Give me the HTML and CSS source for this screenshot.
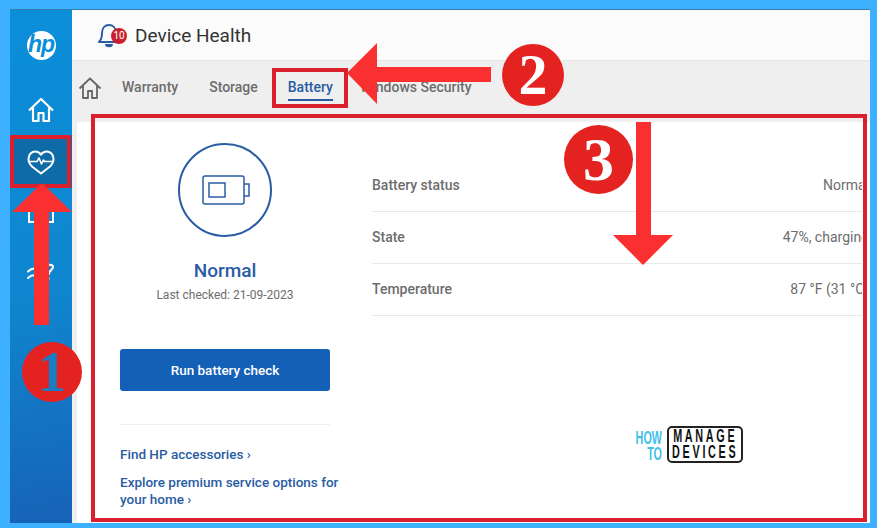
FILE: index.html
```html
<!DOCTYPE html>
<html lang="en">
<head>
    <meta charset="UTF-8">
    <meta name="viewport" content="width=device-width, initial-scale=1.0">
    <title>Device Health</title>
    <link rel="stylesheet" href="styles.css">
</head>
<body>
    <div class="app">
        <nav class="sidebar">
            <div class="logo"><span>hp</span></div>
            <a class="side-item" href="#">
                <svg width="28" height="28" viewBox="0 0 28 28" fill="none" stroke="#fff" stroke-width="2.2" stroke-linejoin="round"><path d="M2 14.5 14 3l12 11.5M6 11v14h5.5v-8h5v8H22V11"/></svg>
            </a>
            <a class="side-item active" href="#">
                <svg width="28" height="26" viewBox="0 0 28 26" fill="none" stroke="#fff" stroke-width="2" stroke-linejoin="round" stroke-linecap="round"><path d="M5 17.5C2.800 15.500 1.500 13 1.500 9.800 1.500 5.500 4.700 2.500 8.300 2.500c2.500 0 4.500 1.200 5.700 3.200 1.200-2 3.200-3.200 5.700-3.200 3.600 0 6.800 3 6.800 7.300 0 3.200-1.300 5.700-3.500 7.700L14 24.500z"/><path d="M1.500 12.500H10l2-3.500 2.500 6 2-4 1 1.500h8.500" stroke-width="1.600"/></svg>
            </a>
            <a class="side-item" href="#">
                <svg width="28" height="26" viewBox="0 0 28 26" fill="none" stroke="#fff" stroke-width="2"><path d="M2 8V21H26V8M2 8V3H26V8M11 21V14H17V21"/></svg>
            </a>
            <a class="side-item" href="#">
                <svg width="28" height="20" viewBox="0 0 28 20" fill="none" stroke="#fff" stroke-width="2" stroke-linecap="round"><path d="M1 8.500c3-3 6-3.500 9-2.500M1 15c2-2 5-3 8-2.500M19 4c1-3 7-3 7 0 0 3-4 3-4 7M21.500 15v1"/></svg>
            </a>
        </nav>

        <div class="main">
            <header class="top-bar">
                <span class="bell">
                    <svg width="24" height="28" viewBox="0 0 24 28" fill="none" stroke="#2a5ca4" stroke-width="2" stroke-linejoin="round"><path d="M2 21c2-2 3-4 3-9 0-5 3-8 7-8s7 3 7 8c0 5 1 7 3 9z"/><path d="M9 23c0 3 6 3 6 0" fill="#2a5ca4"/></svg>
                    <span class="badge">10</span>
                </span>
                <h1>Device Health</h1>
            </header>

            <div class="tabs">
                <svg class="tab-home" width="24" height="24" viewBox="0 0 24 24" fill="none" stroke="#666" stroke-width="1.800" stroke-linejoin="round"><path d="M1.500 12.500 12 2.500l10.500 10M5 9.500V22h5v-7h4v7h5V9.500"/></svg>
                <a class="tab" href="#">Warranty</a>
                <a class="tab" href="#">Storage</a>
                <a class="tab current" href="#">Battery</a>
                <a class="tab" href="#">Windows Security</a>
            </div>

            <section class="card">
                <div class="summary">
                    <div class="status-ring">
                        <svg width="48" height="30" viewBox="0 0 48 30" fill="none" stroke="#2a5ca4" stroke-width="1.500"><rect x="1" y="1" width="41" height="28" rx="2"/><rect x="7" y="8" width="16" height="14"/><path d="M42 9h5v12h-5"/></svg>
                    </div>
                    <h2>Normal</h2>
                    <p class="checked">Last checked: 21-09-2023</p>
                    <button class="run-btn">Run battery check</button>
                    <hr>
                    <a class="more" href="#">Find HP accessories ›</a>
                    <a class="more" href="#">Explore premium service options for your home ›</a>
                </div>

                <div class="details">
                    <div class="row"><span>Battery status</span><span class="val">Normal</span></div>
                    <div class="row"><span>State</span><span class="val">47%, charging</span></div>
                    <div class="row"><span>Temperature</span><span class="val">87 °F (31 °C)</span></div>
                    <div class="brand">
                        <div class="brand-how"><span>HOW<br>TO</span></div>
                        <div class="brand-box"><span>MANAGE<br>DEVICES</span></div>
                    </div>
                </div>
            </section>
        </div>
    </div>

    <!-- red annotations drawn over the screenshot -->
    <div class="mark mark-side"></div>
    <div class="mark mark-tab"></div>
    <div class="mark mark-card"></div>
    <svg class="arrows" width="877" height="528" viewBox="0 0 877 528" fill="#f9302f">
        <path d="M42 183 72 212H49V325H34V212H12Z"/>
        <path d="M347 73 377 43V67H491V82H377V104Z"/>
        <path d="M636 122H651V235H673L643 265 613 235H636Z"/>
    </svg>
    <div class="num num-1">1</div>
    <div class="num num-2">2</div>
    <div class="num num-3">3</div>
</body>
</html>
```

FILE: styles.css
```css
body {
    margin: 0;
    width: 877px;
    height: 528px;
    overflow: hidden;
    background-color: #3db0ff;
    font-family: Roboto, "Open Sans", sans-serif;
    color: #5f5f5f;
    padding: 9px 7px 5px 10px;
    box-sizing: border-box;
    position: relative;
}

.app {
    display: flex;
    height: 100%;
    background-color: #fff;
    border-top: 1px solid #3a7ca8;
    box-sizing: border-box;
}

.sidebar {
    width: 62px;
    flex-shrink: 0;
    background-image: linear-gradient(172deg, #0b8ed9, #0f86cf 55%, #1763b8);
    display: flex;
    flex-direction: column;
    align-items: center;
}

.logo {
    width: 29px;
    height: 29px;
    margin-top: 21px;
    background-color: #fff;
    border-radius: 50%;
    display: flex;
    align-items: center;
    justify-content: center;
}

.logo span {
    color: #0b8ed9;
    font-family: "Liberation Sans", sans-serif;
    font-size: 23px;
    font-weight: bold;
    font-style: italic;
    line-height: 29px;
    letter-spacing: -1px;
    margin-top: -2px;
}

.side-item {
    width: 100%;
    display: flex;
    align-items: center;
    justify-content: center;
    height: 52px;
    flex-shrink: 0;
}

.side-item:nth-child(2) {
    margin-top: 24px;
}

.side-item:nth-child(5) {
    margin-top: 7px;
}

.active {
    background-color: #0e6ba8;
}

.main {
    flex: 1;
    min-width: 0;
    display: flex;
    flex-direction: column;
    background-color: #efefef;
}

.top-bar {
    height: 50px;
    background-color: #fbfbfb;
    border-bottom: 1px solid #e6e6e6;
    display: flex;
    align-items: center;
    padding-left: 25px;
    flex-shrink: 0;
}

.bell {
    position: relative;
    width: 28px;
    height: 28px;
    margin-right: 10px;
}

.badge {
    position: absolute;
    left: 14px;
    top: 7px;
    width: 16px;
    height: 16px;
    border-radius: 50%;
    background-color: #c8202c;
    color: #fff;
    font-size: 10px;
    line-height: 16px;
    text-align: center;
}

.top-bar h1 {
    margin: 0;
    font-size: 19px;
    font-weight: 400;
    color: #333;
}

.tabs {
    height: 61px;
    flex-shrink: 0;
    display: flex;
    align-items: center;
    padding: 0 0 8px 6px;
    box-sizing: border-box;
}

.tab-home {
    margin-right: 20px;
}

.tab {
    font-size: 14px;
    font-weight: 500;
    color: #6d6d6d;
    text-decoration: none;
    margin-right: 31px;
    padding: 4px 0;
    border-bottom: 2px solid transparent;
}

.tab:nth-of-type(2) {
    margin-right: 30px;
}

.tab.current {
    color: #2a5ca4;
    border-bottom-color: #2a5ca4;
    margin-right: 27px;
}

.card {
    flex: 1;
    min-height: 0;
    background-color: #fff;
    margin-left: 5px;
    display: flex;
    overflow: hidden;
}

.summary {
    width: 210px;
    margin-left: 43px;
    flex-shrink: 0;
    text-align: center;
    padding-top: 21px;
}

.status-ring {
    width: 94px;
    height: 94px;
    box-sizing: border-box;
    margin: 0 auto;
    border: 2.500px solid #2a5ca4;
    border-radius: 50%;
    display: flex;
    align-items: center;
    justify-content: center;
    padding-left: 2px;
}

.summary h2 {
    margin: 21px 0 0;
    font-size: 19px;
    line-height: 26px;
    font-weight: 500;
    color: #2a5ca4;
}

.checked {
    margin: 4px 0 0;
    font-size: 12px;
    line-height: 14px;
    color: #6d6d6d;
}

.run-btn {
    display: block;
    width: 210px;
    height: 42px;
    margin-top: 47px;
    border: none;
    border-radius: 3px;
    background-color: #1560b7;
    color: #fff;
    font-family: inherit;
    font-size: 13.500px;
    font-weight: 500;
}

.summary hr {
    width: 210px;
    margin: 33px 0 21px;
    border: none;
    border-top: 1px solid #eee;
}

.more {
    display: block;
    width: 225px;
    text-align: left;
    font-size: 13.500px;
    line-height: 17px;
    font-weight: 500;
    color: #2a5ca4;
    text-decoration: none;
    margin-bottom: 11px;
}

/* the value column runs past the window edge, as in the app */
.details {
    width: 490px;
    flex-shrink: 0;
    margin-left: 42px;
    padding-top: 38px;
    overflow: hidden;
}

.row {
    width: 497px;
    height: 52px;
    box-sizing: border-box;
    padding-bottom: 2px;
    border-bottom: 1px solid #e9e9e9;
    display: flex;
    align-items: center;
    justify-content: space-between;
    font-size: 14px;
    font-weight: 500;
    color: #6d6d6d;
}

.val {
    font-weight: 400;
}

.brand {
    display: flex;
    margin: 110px 0 0 263px;
}

.brand-how {
    width: 27px;
    margin: 4px 5px 0 0;
    display: flex;
    justify-content: flex-end;
}

.brand-how span {
    flex-shrink: 0;
    font-family: "Liberation Sans", sans-serif;
    font-size: 18px;
    line-height: 16px;
    font-weight: bold;
    color: #3fc1e8;
    text-align: right;
    transform: scaleX(0.6);
    transform-origin: right;
}

.brand-box {
    width: 76px;
    height: 37px;
    box-sizing: border-box;
    border: 2px solid #222;
    border-radius: 5px;
    display: flex;
    justify-content: center;
    overflow: hidden;
}

.brand-box span {
    flex-shrink: 0;
    font-family: "Liberation Sans", sans-serif;
    font-size: 18px;
    line-height: 16px;
    font-weight: bold;
    letter-spacing: 4.500px;
    color: #111;
    text-align: center;
    white-space: nowrap;
    transform: scaleX(0.6);
}

.mark {
    position: absolute;
    box-sizing: border-box;
    border: 4px solid #d9202c;
}

.mark-side {
    left: 10px;
    top: 135px;
    width: 61px;
    height: 53px;
}

.mark-tab {
    left: 272px;
    top: 68px;
    width: 76px;
    height: 40px;
}

.mark-card {
    left: 91px;
    top: 114px;
    width: 776px;
    height: 408px;
}

.arrows {
    position: absolute;
    left: 0;
    top: 0;
}

.num {
    position: absolute;
    border-radius: 50%;
    background-color: #e42320;
    color: #fff;
    font-family: "Liberation Serif", serif;
    font-weight: bold;
    text-align: center;
}

.num-1 {
    left: 22px;
    top: 342px;
    width: 60px;
    height: 60px;
    font-size: 56px;
    line-height: 60px;
    color: #1a7cc4;
}

.num-2 {
    left: 502px;
    top: 44px;
    width: 62px;
    height: 62px;
    font-size: 58px;
    line-height: 62px;
}

.num-3 {
    left: 564px;
    top: 125px;
    width: 69px;
    height: 69px;
    font-size: 62px;
    line-height: 69px;
}
```
